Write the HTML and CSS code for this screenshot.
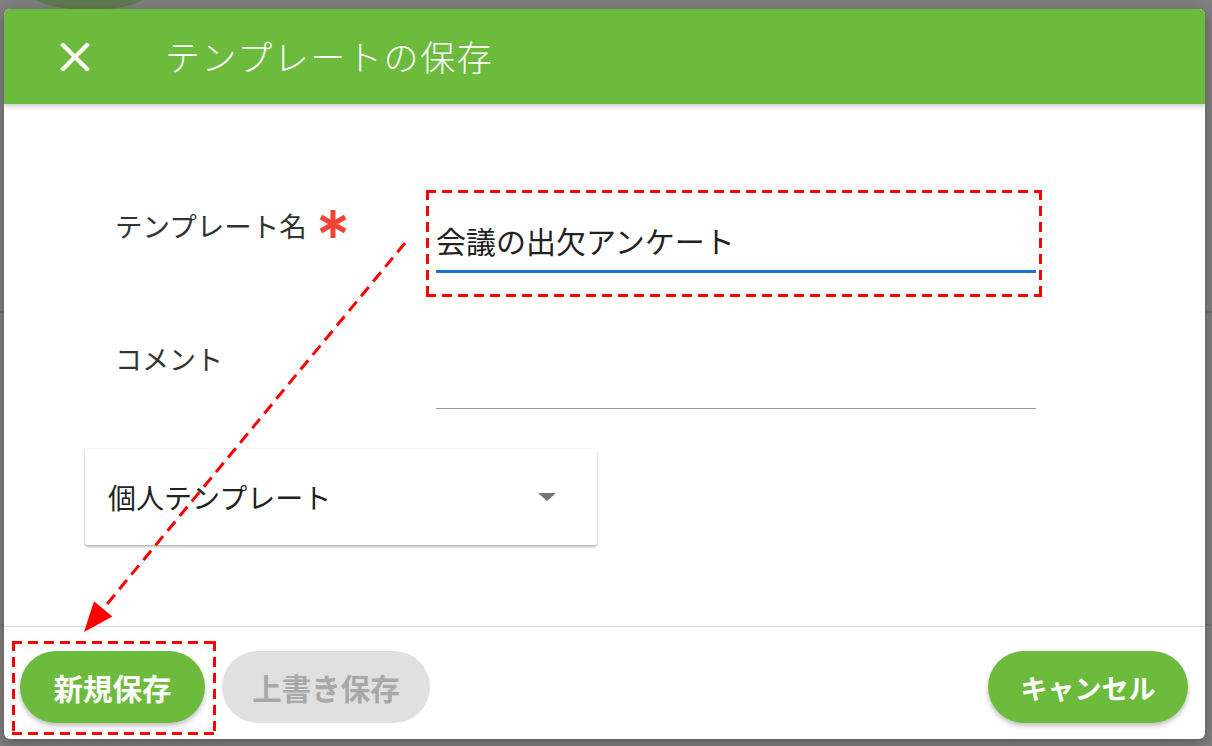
FILE: index.html
```html
<!DOCTYPE html>
<html lang="ja">
<head>
<meta charset="utf-8">
<title>テンプレートの保存</title>
<link rel="stylesheet" href="styles.css">
</head>
<body>
<div class="backdrop">
  <div class="bg-blob"></div>
  <div class="dialog">
    <header class="dialog-header">
      <button class="close-btn" aria-label="閉じる">
        <svg width="30" height="28" viewBox="0 0 30 28"><path d="M3 2 L27 26 M27 2 L3 26" stroke="#fff" stroke-width="4.2" stroke-linecap="square" fill="none"/></svg>
      </button>
      <h1 class="dialog-title">テンプレートの保存</h1>
    </header>
    <div class="dialog-body">
      <div class="row row-name">
        <div class="label label-name">テンプレート名<span class="required"><svg width="32" height="32" viewBox="0 0 32 32"><g stroke="#f44336" stroke-width="5" stroke-linecap="butt"><path d="M16 2 V30"/><path d="M3.9 9 L28.1 23"/><path d="M28.1 9 L3.9 23"/></g></svg></span></div>
        <div class="highlight-box">
          <div class="field field-active">会議の出欠アンケート</div>
        </div>
      </div>
      <div class="row row-comment">
        <div class="label label-comment">コメント</div>
        <div class="field field-plain">&nbsp;</div>
      </div>
      <div class="select-card">
        <span class="select-text">個人テンプレート</span>
        <span class="select-arrow"></span>
      </div>
    </div>
    <footer class="dialog-footer">
      <div class="highlight-box btn-box">
        <button class="btn btn-green">新規保存</button>
      </div>
      <button class="btn btn-disabled">上書き保存</button>
      <button class="btn btn-green btn-cancel">キャンセル</button>
    </footer>
  </div>
  <svg class="annot" width="1212" height="746" viewBox="0 0 1212 746">
    <line x1="405" y1="243" x2="103" y2="609" stroke="#ff0000" stroke-width="3" stroke-dasharray="12 7"/>
    <polygon points="84,632 112.4,616.6 94,601.2" fill="#ff0000"/>
  </svg>
</div>
</body>
</html>
```
FILE: styles.css
```css
* { box-sizing: border-box; }
html, body { margin: 0; padding: 0; }
body {
  font-family: "Noto Sans CJK JP", "Noto Sans", sans-serif;
  background-color: #7f7f7f;
  background-image:
    linear-gradient(to bottom, transparent 311px, #6c6c6c 311px, #6c6c6c 313px, transparent 313px),
    linear-gradient(to bottom, transparent 624px, #727272 624px, #727272 626px, transparent 626px);
  width: 1212px;
  height: 746px;
  overflow: hidden;
}
.backdrop {
  position: relative;
  width: 1212px;
  height: 746px;
  padding: 9px 7px 7px 4px;
}
.bg-blob {
  position: absolute;
  left: 27px;
  top: -30px;
  width: 124px;
  height: 40px;
  border-radius: 50%;
  background: #5f7950;
}
.dialog {
  position: relative;
  width: 1201px;
  height: 730px;
  background: #fff;
  border-radius: 6px;
  display: flex;
  flex-direction: column;
  overflow: hidden;
  box-shadow: 0 4px 14px rgba(0,0,0,0.3);
}
.dialog-header {
  height: 95px;
  flex: none;
  background: #6cbb3c;
  display: flex;
  align-items: center;
  padding-left: 56px;
  box-shadow: 0 3px 5px rgba(0,0,0,0.18);
  position: relative;
  z-index: 1;
}
.close-btn {
  background: none;
  border: 0;
  padding: 0;
  width: 30px;
  height: 28px;
  display: flex;
}
.dialog-title {
  margin: -2px 0 0 75px;
  color: #fff;
  font-size: 35px;
  font-weight: 300;
  line-height: 40px;
  letter-spacing: 1.6px;
}
.dialog-body {
  flex: 1;
  padding: 86px 0 0 81px;
}
.row {
  display: flex;
  align-items: flex-start;
  padding-left: 30px;
}
.label {
  font-size: 27px;
  line-height: 40px;
  color: #333;
  display: flex;
  align-items: center;
}
.label-name { width: 311px; margin-top: 15px; font-size: 27.5px; }
.label-comment { width: 321px; margin-top: 8px; }
.required {
  display: inline-flex;
  margin-left: 10px;
  margin-top: -2px;
}
.highlight-box {
  padding: 3px;
  background:
    repeating-linear-gradient(to right, #ff0000 0 10px, transparent 10px 16px) left top / 100% 3px no-repeat,
    repeating-linear-gradient(to right, #ff0000 0 10px, transparent 10px 16px) left bottom / 100% 3px no-repeat,
    repeating-linear-gradient(to bottom, #ff0000 0 10px, transparent 10px 16px) left top / 3px 100% no-repeat,
    repeating-linear-gradient(to bottom, #ff0000 0 10px, transparent 10px 16px) right top / 3px 100% no-repeat;
}
.row-name .highlight-box {
  width: 616px;
  padding: 27px 6px 24px 10px;
}
.field {
  width: 600px;
  font-size: 30px;
  line-height: 40px;
  color: #222;
  padding-top: 3px;
  padding-bottom: 10px;
}
.field-active { border-bottom: 3px solid #1a6fd0; }
.row-comment { margin-top: 34px; }
.field-plain {
  padding-top: 27px;
  border-bottom: 1px solid #9a9a9a;
}
.select-card {
  margin-top: 40px;
  width: 512px;
  height: 96px;
  border-radius: 3px;
  box-shadow: 0 2px 3px rgba(0,0,0,0.28), 0 0 2px rgba(0,0,0,0.08);
  display: flex;
  align-items: center;
  justify-content: space-between;
  padding: 0 41px 0 23px;
}
.select-text {
  font-size: 28px;
  color: #222;
  line-height: 40px;
}
.select-arrow {
  width: 0;
  height: 0;
  border-left: 9px solid transparent;
  border-right: 9px solid transparent;
  border-top: 8px solid #757575;
}
.dialog-footer {
  flex: none;
  height: 113px;
  border-top: 1px solid #dcdcdc;
  padding: 14px 17px 4px 8px;
  display: flex;
  align-items: flex-start;
}
.btn-box {
  padding: 10px 11px 12px 8px;
}
.btn {
  height: 72px;
  border: 0;
  border-radius: 36px;
  font-family: "Noto Sans CJK JP", "Noto Sans", sans-serif;
  font-size: 29.5px;
  font-weight: 700;
  padding: 0;
  display: flex;
  align-items: center;
  justify-content: center;
}
.btn-green {
  background: #6cbb3c;
  color: #fff;
  width: 185px;
  box-shadow: 0 3px 5px rgba(0,0,0,0.25);
}
.btn-disabled {
  margin-left: 6px;
  margin-top: 10px;
  width: 208px;
  background: #e0e0e0;
  color: #a8a8a8;
}
.btn-cancel {
  margin-left: auto;
  margin-top: 10px;
  width: 200px;
  font-size: 27px;
}
.annot {
  position: absolute;
  left: 0;
  top: 0;
  pointer-events: none;
}
```
